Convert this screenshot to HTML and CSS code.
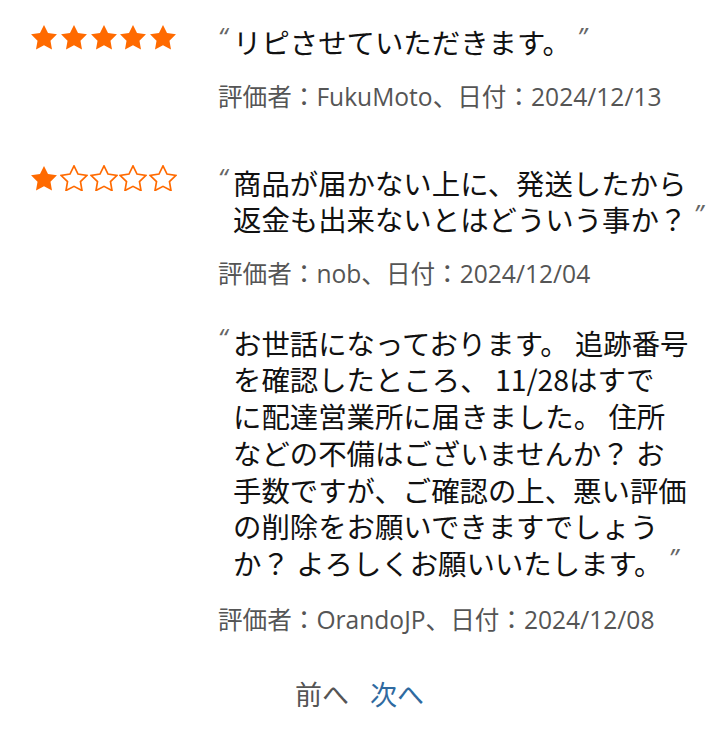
FILE: index.html
```html
<!DOCTYPE html>
<html lang="ja">
<head>
<meta charset="utf-8">
<title>評価</title>
<link rel="stylesheet" href="styles.css">
</head>
<body>
<div class="reviews">
  <div class="review">
    <div class="stars">
      <svg class="star" viewBox="1.2 1.3 21.6 20.6"><path class="full" d="M12 2l3.09 6.26L22 9.27l-5 4.87 1.18 6.88L12 17.77l-6.18 3.25L7 14.14 2 9.27l6.91-1.01L12 2z"/></svg>
      <svg class="star" viewBox="1.2 1.3 21.6 20.6"><path class="full" d="M12 2l3.09 6.26L22 9.27l-5 4.87 1.18 6.88L12 17.77l-6.18 3.25L7 14.14 2 9.27l6.91-1.01L12 2z"/></svg>
      <svg class="star" viewBox="1.2 1.3 21.6 20.6"><path class="full" d="M12 2l3.09 6.26L22 9.27l-5 4.87 1.18 6.88L12 17.77l-6.18 3.25L7 14.14 2 9.27l6.91-1.01L12 2z"/></svg>
      <svg class="star" viewBox="1.2 1.3 21.6 20.6"><path class="full" d="M12 2l3.09 6.26L22 9.27l-5 4.87 1.18 6.88L12 17.77l-6.18 3.25L7 14.14 2 9.27l6.91-1.01L12 2z"/></svg>
      <svg class="star" viewBox="1.2 1.3 21.6 20.6"><path class="full" d="M12 2l3.09 6.26L22 9.27l-5 4.87 1.18 6.88L12 17.77l-6.18 3.25L7 14.14 2 9.27l6.91-1.01L12 2z"/></svg>
    </div>
    <div class="body">
      <p class="comment"><span class="q-open">“</span>リピさせていただきます。 <span class="q-close">”</span></p>
      <p class="meta">評価者：FukuMoto、日付：2024/12/13</p>
    </div>
  </div>
  <div class="review">
    <div class="stars">
      <svg class="star" viewBox="1.2 1.3 21.6 20.6"><path class="full" d="M12 2l3.09 6.26L22 9.27l-5 4.87 1.18 6.88L12 17.77l-6.18 3.25L7 14.14 2 9.27l6.91-1.01L12 2z"/></svg>
      <svg class="star" viewBox="1.2 1.3 21.6 20.6"><path class="empty" d="M12 2l3.09 6.26L22 9.27l-5 4.87 1.18 6.88L12 17.77l-6.18 3.25L7 14.14 2 9.27l6.91-1.01L12 2z"/></svg>
      <svg class="star" viewBox="1.2 1.3 21.6 20.6"><path class="empty" d="M12 2l3.09 6.26L22 9.27l-5 4.87 1.18 6.88L12 17.77l-6.18 3.25L7 14.14 2 9.27l6.91-1.01L12 2z"/></svg>
      <svg class="star" viewBox="1.2 1.3 21.6 20.6"><path class="empty" d="M12 2l3.09 6.26L22 9.27l-5 4.87 1.18 6.88L12 17.77l-6.18 3.25L7 14.14 2 9.27l6.91-1.01L12 2z"/></svg>
      <svg class="star" viewBox="1.2 1.3 21.6 20.6"><path class="empty" d="M12 2l3.09 6.26L22 9.27l-5 4.87 1.18 6.88L12 17.77l-6.18 3.25L7 14.14 2 9.27l6.91-1.01L12 2z"/></svg>
    </div>
    <div class="body">
      <p class="comment"><span class="q-open">“</span>商品が届かない上に、発送したから<br>返金も出来ないとはどういう事か？ <span class="q-close">”</span></p>
      <p class="meta">評価者：nob、日付：2024/12/04</p>
      <p class="comment reply"><span class="q-open">“</span>お世話になっております。 追跡番号<br>を確認したところ、 11/28はすで<br>に配達営業所に届きました。 住所<br>などの不備はございませんか？ お<br>手数ですが、ご確認の上、悪い評価<br>の削除をお願いできますでしょう<br>か？ よろしくお願いいたします。 <span class="q-close">”</span></p>
      <p class="meta reply-meta">評価者：OrandoJP、日付：2024/12/08</p>
    </div>
  </div>
</div>
<nav class="pager"><span class="prev">前へ</span><a class="next" href="#">次へ</a></nav>
</body>
</html>
```
FILE: styles.css
```css
html, body {
  margin: 0;
  padding: 0;
  background: #ffffff;
}
body {
  font-family: "Open Sans", "Noto Sans CJK JP", sans-serif;
  color: #111111;
}
.reviews {
  padding: 24px 0 0 30px;
}
.review {
  display: grid;
  grid-template-columns: 188px 1fr;
  align-items: start;
  margin-bottom: 53px;
}
.review:last-child {
  margin-bottom: 0;
}
.stars {
  display: flex;
  gap: 1.75px;
  margin-top: 0;
}
.star {
  width: 28px;
  height: 26.7px;
  display: block;
}
.full {
  fill: #ff6a00;
}
.empty {
  fill: #ffffff;
  stroke: #ff6a00;
  stroke-width: 1.3;
  stroke-linejoin: miter;
}
.body p {
  margin: 0;
}
.comment {
  font-size: 28.4px;
  line-height: 36.5px;
  padding-left: 15px;
  font-family: "Noto Sans CJK JP", sans-serif;
}
.comment.reply {
  margin-top: 36px;
  line-height: 36.8px;
}
.q-open, .q-close {
  font-family: "Open Sans", sans-serif;
  font-size: 26px;
  line-height: 24px;
  color: #666666;
  vertical-align: top;
}
.q-open {
  display: inline-block;
  width: 15px;
  margin-left: -15px;
  font-style: italic;
}
.q-close {
  font-style: italic;
}
.body .meta {
  font-size: 24.6px;
  line-height: 30px;
  color: #555555;
  margin-top: 21px;
}
.body .reply-meta {
  margin-top: 23px;
}
.pager {
  display: flex;
  justify-content: center;
  gap: 21px;
  margin-top: 44px;
  font-size: 27px;
  line-height: 30px;
  font-family: "Noto Sans CJK JP", sans-serif;
}
.prev {
  color: #555555;
}
.next {
  color: #2f6aa0;
  text-decoration: none;
}
```
